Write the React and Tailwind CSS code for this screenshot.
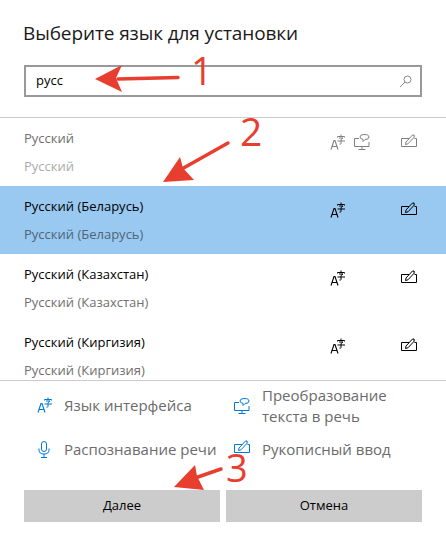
import React from "react";

const font = { fontFamily: '"Open Sans", "Noto Sans", sans-serif' };

const LangIcon = ({ className }) => (
  <svg width="16" height="16" viewBox="0 0 16 16" fill="none" stroke="currentColor" strokeWidth="1" className={className}>
    <path d="M1 15.5 L4 6.5 L5 6.5 L8 15.5 M2.2 12.5 H6.8" strokeWidth="1.1" />
    <path d="M11 0.5 V2 M7.5 3.5 V2.5 H14.5 V3.5 M9 4 H13 L11 5.5 V9.5 Q11 10.5 9.5 10 M7.5 7 H15" />
  </svg>
);

const SpeechIcon = ({ className }) => (
  <svg width="16" height="16" viewBox="0 0 16 16" fill="none" stroke="currentColor" strokeWidth="1" className={className}>
    <path d="M5 4.5 H0.5 V12.5 H15 V8" />
    <path d="M8 12.5 V15 M4.5 15.5 H11.5" />
    <path d="M6 3 Q6 0.5 10 0.5 Q15 0.5 15 3 Q15 5.5 11 5.5 L9 7.5 L9 5.3 Q6 5 6 3 Z" />
  </svg>
);

const PenIcon = ({ className }) => (
  <svg width="16" height="13" viewBox="0 0 16 13" fill="none" stroke="currentColor" strokeWidth="1" className={className}>
    <path d="M8 4.5 H0.5 V12.5 H15.5 V4.5 H13.5" />
    <path d="M4.5 10.5 L5 8 L11.5 1 L13.5 2.8 L7 9.8 Z" />
    <path d="M12 0.5 L14 2.3" />
  </svg>
);

const MicIcon = ({ className }) => (
  <svg width="12" height="17" viewBox="0 0 12 17" fill="none" stroke="currentColor" strokeWidth="1" className={className}>
    <rect x="3.5" y="0.5" width="5" height="10" rx="2.5" />
    <path d="M1 7.5 V9 Q1 13 6 13 Q11 13 11 9 V7.5 M6 13 V16 M3 16.5 H9" />
  </svg>
);

const languages = [
  { name: "Русский", speech: true },
  { name: "Русский (Беларусь)", active: true },
  { name: "Русский (Казахстан)" },
  { name: "Русский (Киргизия)" },
];

const LanguageRow = ({ lang, index }) => {
  const dim = index === 0;
  return (
    <div className={`h-[68px] shrink-0 pl-6 pr-[29px] flex justify-between ${lang.active ? "bg-[#99c9f0]" : ""}`}>
      <div className="flex flex-col text-[13px] leading-[18px] pt-[11px] gap-[10px]">
        <span className={dim ? "text-[#6f6f6f]" : "text-black"}>{lang.name}</span>
        <span className={dim ? "text-[#ababab]" : lang.active ? "text-[#4f6577]" : "text-[#6f6f6f]"}>{lang.name}</span>
      </div>
      <div className={`flex items-start pt-4 ${dim ? "text-[#808080]" : "text-black"}`}>
        <LangIcon />
        <div className="w-4 ml-2">{lang.speech && <SpeechIcon />}</div>
        <PenIcon className="ml-[31px]" />
      </div>
    </div>
  );
};

export default function App() {
  return (
    <div style={font} className="relative w-[446px] h-[546px] bg-white overflow-hidden flex flex-col">
      <h1 className="pl-[23px] pt-[19px] text-[19px] leading-[28px] tracking-[-0.1px] text-[#1a1a1a]">Выберите язык для установки</h1>

      <div className="mx-6 mt-[18px] h-8 border-2 border-[#999999] flex items-center justify-between pl-[10px] pr-2">
        <span className="text-[13px] text-black">русс</span>
        <svg width="13" height="13" viewBox="0 0 13 13" fill="none" stroke="#8a8a8a" strokeWidth="1">
          <circle cx="8.5" cy="4.5" r="3.5" />
          <path d="M6 7 L1 12" />
        </svg>
      </div>

      <div className="mt-5 h-[264px] border-y border-[#cccccc] overflow-hidden flex flex-col">
        {languages.map((lang, i) => (
          <LanguageRow key={lang.name} lang={lang} index={i} />
        ))}
      </div>

      <div className="grid grid-cols-[197px_1fr] gap-y-3 pl-[37px] pr-6 pt-1 text-[15px] leading-[21px] text-[#6b6b6b]">
        <div className="flex items-center mb-[2px]">
          <LangIcon className="text-[#0078d7]" />
          <span className="ml-[11px]">Язык интерфейса</span>
        </div>
        <div className="flex items-center">
          <SpeechIcon className="text-[#0078d7]" />
          <span className="ml-3">
            Преобразование
            <br />
            текста в речь
          </span>
        </div>
        <div className="flex items-center">
          <MicIcon className="text-[#0078d7] ml-[1px]" />
          <span className="ml-[14px]">Распознавание речи</span>
        </div>
        <div className="flex items-start">
          <PenIcon className="text-[#0078d7] mt-[1px]" />
          <span className="ml-3">Рукописный ввод</span>
        </div>
      </div>

      <div className="mt-[30px] mx-6 flex gap-[6px]">
        <button className="flex-1 h-8 bg-[#cccccc] text-[13px] text-black">Далее</button>
        <button className="flex-1 h-8 bg-[#cccccc] text-[13px] text-black">Отмена</button>
      </div>

      {/* red annotations on top of the screenshot */}
      <svg width="446" height="546" className="absolute inset-0 pointer-events-none" fill="#e83e30">
        <path d="M178 77.5 L118 79" stroke="#e83e30" strokeWidth="3.5" strokeLinecap="round" />
        <path d="M95 79 L122 65 L116 78 L122 92 Z" />
        <path d="M228 143 L180 170" stroke="#e83e30" strokeWidth="3.5" strokeLinecap="round" />
        <path d="M163 182 L180 157 L183 168 L194 180 Z" />
        <path d="M221 469 L195 478" stroke="#e83e30" strokeWidth="3.5" strokeLinecap="round" />
        <path d="M174 487 L195 465 L197 476 L204 490 Z" />
      </svg>
      <span className="absolute left-[191px] top-[48px] text-[38px] leading-[44px] text-[#e83e30]">1</span>
      <span className="absolute left-[240px] top-[109px] text-[39px] leading-[44px] text-[#e83e30]">2</span>
      <span className="absolute left-[226px] top-[445px] text-[38px] leading-[44px] text-[#e83e30]">3</span>
    </div>
  );
}
